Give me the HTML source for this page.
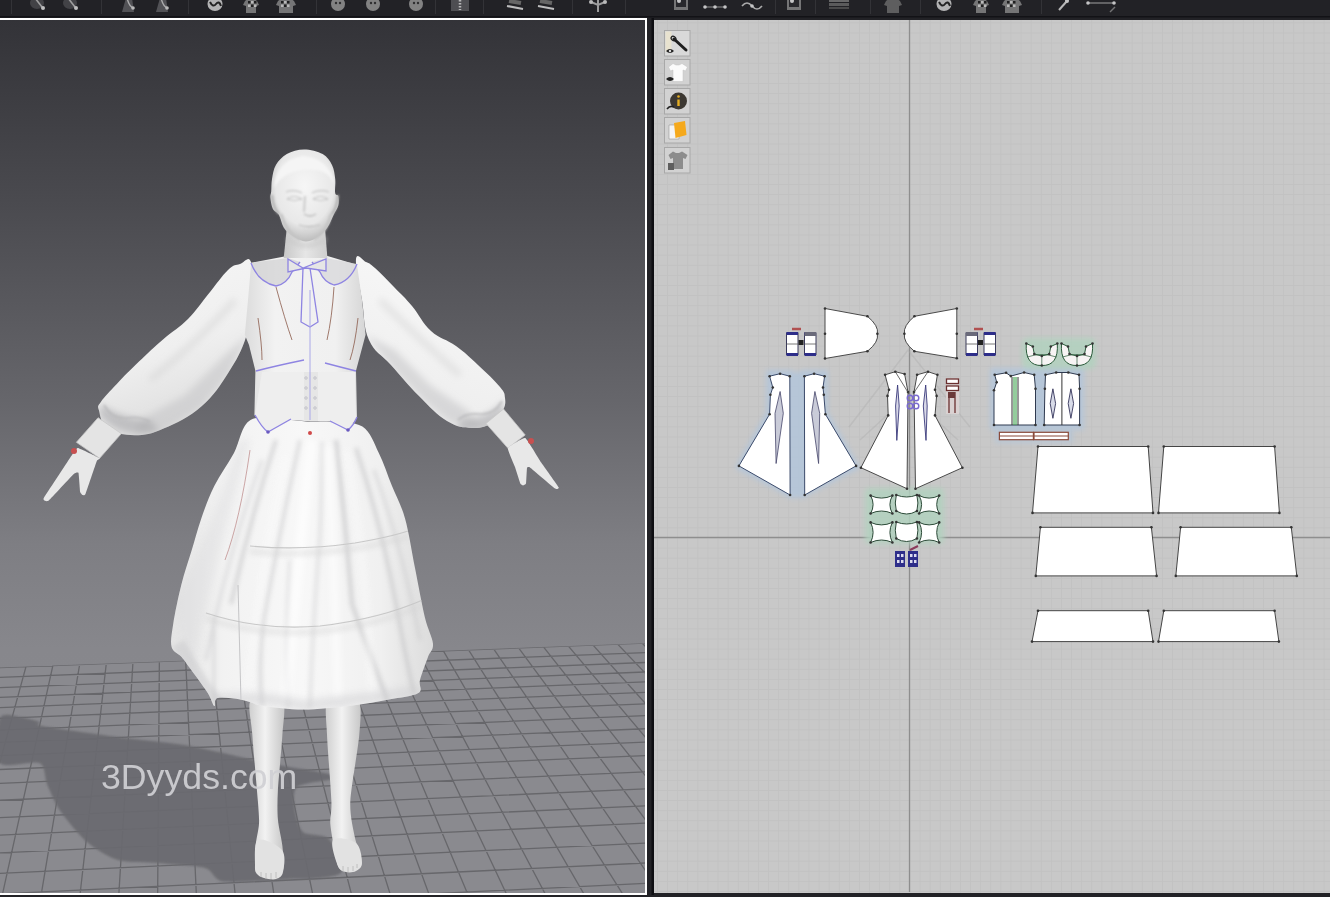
<!DOCTYPE html>
<html><head><meta charset="utf-8"><style>
html,body{margin:0;padding:0;background:#222226;width:1330px;height:897px;overflow:hidden}
svg{display:block}
</style></head><body>
<svg width="1330" height="897" viewBox="0 0 1330 897">
<defs>
<linearGradient id="bg" x1="0" y1="0" x2="0" y2="1">
<stop offset="0" stop-color="#333338"/>
<stop offset="0.207" stop-color="#4a4a4f"/>
<stop offset="0.436" stop-color="#66666b"/>
<stop offset="0.6" stop-color="#7e7e83"/>
<stop offset="0.72" stop-color="#87878c"/>
<stop offset="1" stop-color="#8a8a8f"/>
</linearGradient>
<linearGradient id="gLeg" x1="0" y1="0" x2="1" y2="0">
<stop offset="0" stop-color="#cfcfcf"/><stop offset="0.45" stop-color="#f2f2f2"/><stop offset="1" stop-color="#c6c6c6"/>
</linearGradient>
<linearGradient id="gSleeveL" x1="0" y1="0" x2="0.3" y2="1">
<stop offset="0" stop-color="#f6f6f6"/><stop offset="0.6" stop-color="#efefef"/><stop offset="1" stop-color="#dedede"/>
</linearGradient>
<linearGradient id="gSleeveR" x1="0" y1="0" x2="-0.3" y2="1">
<stop offset="0" stop-color="#f6f6f6"/><stop offset="0.6" stop-color="#efefef"/><stop offset="1" stop-color="#dedede"/>
</linearGradient>
<linearGradient id="gSkirt" x1="0" y1="0" x2="1" y2="0">
<stop offset="0" stop-color="#e4e4e4"/><stop offset="0.2" stop-color="#f2f2f2"/><stop offset="0.5" stop-color="#f8f8f8"/><stop offset="0.8" stop-color="#f0f0f0"/><stop offset="1" stop-color="#dcdcdc"/>
</linearGradient>
<radialGradient id="gHead" cx="0.5" cy="0.4" r="0.6">
<stop offset="0" stop-color="#f6f6f6"/><stop offset="0.7" stop-color="#e8e8e8"/><stop offset="1" stop-color="#bcbcbc"/>
</radialGradient>
<filter id="soft" x="-5%" y="-5%" width="110%" height="110%"><feGaussianBlur stdDeviation="1.2"/></filter>
<pattern id="pgrid" x="909.5" y="537.5" width="10.1" height="10.1" patternUnits="userSpaceOnUse"><path d="M0 0.5H10.1M0.5 0V10.1" stroke="#bcbcbc" stroke-width="1" fill="none" opacity="0.5"/></pattern>
<filter id="halo" x="-20%" y="-20%" width="140%" height="140%"><feGaussianBlur stdDeviation="2.5"/></filter>
<clipPath id="clipSL"><path d="M251.0 262.0C248.6 254.8 244.6 262.4 240.0 264.0C235.4 265.6 234.4 263.9 228.0 270.0C221.6 276.1 216.0 284.8 208.0 294.6C200.0 304.4 196.9 310.1 188.0 319.0C179.1 327.9 173.4 330.5 163.6 339.0C153.8 347.5 148.4 352.6 139.0 361.6C129.6 370.6 124.4 375.9 116.8 383.9C109.2 391.9 104.6 396.4 101.0 401.7C97.4 407.0 97.6 405.2 99.0 410.6C100.4 416.0 100.7 423.6 107.8 428.5C114.9 433.4 123.4 435.2 134.6 435.2C145.8 435.2 150.2 434.3 163.6 428.5C177.0 422.7 188.7 417.4 201.6 406.2C214.5 395.0 219.4 386.5 228.3 372.7C237.2 358.9 241.3 351.5 246.0 337.0C250.7 322.5 251.0 315.0 252.0 300.0C253.0 285.0 253.4 269.2 251.0 262.0Z"/></clipPath>
<clipPath id="clipSR"><path d="M356.0 259.0C356.8 251.4 362.2 260.2 366.0 262.0C369.8 263.8 369.4 263.0 375.0 268.0C380.6 273.0 386.6 279.4 394.0 287.0C401.4 294.6 404.6 297.2 412.0 306.0C419.4 314.8 422.2 323.0 431.0 331.0C439.8 339.0 446.6 339.2 456.0 346.0C465.4 352.8 469.2 356.8 478.0 365.0C486.8 373.2 494.6 380.4 500.0 387.0C505.4 393.6 504.4 393.4 505.0 398.0C505.6 402.6 505.6 405.0 503.0 410.0C500.4 415.0 498.2 419.4 492.0 423.0C485.8 426.6 481.0 428.4 472.0 428.0C463.0 427.6 457.6 427.4 447.0 421.0C436.4 414.6 430.2 407.2 419.0 396.0C407.8 384.8 401.0 376.2 391.0 365.0C381.0 353.8 374.8 353.0 369.0 340.0C363.2 327.0 364.6 316.2 362.0 300.0C359.4 283.8 355.2 266.6 356.0 259.0Z"/></clipPath>
<clipPath id="clipSK"><path d="M250.5 420.0C241.0 425.5 240.0 442.0 234.0 453.0C228.0 464.0 219.8 475.1 214.3 486.0C208.8 496.9 205.0 507.8 201.2 518.7C197.4 529.6 194.6 540.6 191.3 551.6C188.0 562.6 184.4 572.4 181.4 584.5C178.4 596.6 174.8 613.6 173.2 624.0C171.6 634.4 170.2 641.5 171.6 647.0C173.0 652.5 178.1 653.0 181.4 656.8C184.7 660.6 186.9 664.0 191.3 670.0C195.7 676.0 204.0 687.0 207.8 693.0C211.6 699.0 212.7 705.2 214.3 706.0C215.9 706.8 213.2 699.1 217.6 698.0C222.0 696.9 233.0 698.3 240.7 699.6C248.4 700.9 253.3 704.4 263.7 706.0C274.1 707.6 288.8 709.5 303.0 709.5C317.2 709.5 334.9 707.6 349.2 706.0C363.5 704.4 377.2 701.8 388.7 699.6C400.2 697.4 413.1 696.3 418.3 693.0C423.5 689.7 418.4 686.0 420.0 680.0C421.6 674.0 425.8 663.0 428.0 657.0C430.2 651.0 433.5 650.3 433.0 643.7C432.5 637.1 427.9 630.0 424.9 617.4C421.9 604.8 418.3 584.5 415.0 568.0C411.7 551.5 408.9 532.4 405.1 518.7C401.3 505.0 396.4 496.9 392.0 486.0C387.6 475.1 383.7 462.9 378.8 453.0C373.9 443.1 370.5 431.8 362.4 426.6C354.3 421.4 338.7 422.8 330.0 422.0C321.3 421.2 316.5 422.3 310.0 422.0C303.5 421.7 300.9 420.3 291.0 420.0C281.1 419.7 260.0 414.5 250.5 420.0Z"/></clipPath>
<linearGradient id="gNeck" x1="0" y1="0" x2="1" y2="0"><stop offset="0" stop-color="#c8c8c8"/><stop offset="0.5" stop-color="#e6e6e6"/><stop offset="1" stop-color="#cfcfcf"/></linearGradient>
<filter id="blur1" x="-20%" y="-20%" width="140%" height="140%"><feGaussianBlur stdDeviation="0.8"/></filter>
<filter id="blur2" x="-20%" y="-20%" width="140%" height="140%"><feGaussianBlur stdDeviation="2"/></filter>
<filter id="blur3" x="-20%" y="-20%" width="140%" height="140%"><feGaussianBlur stdDeviation="3.5"/></filter>
<linearGradient id="gTorso" x1="0" y1="0" x2="1" y2="0"><stop offset="0" stop-color="#dcdcdc"/><stop offset="0.25" stop-color="#f2f2f2"/><stop offset="0.75" stop-color="#f0f0f0"/><stop offset="1" stop-color="#d6d6d6"/></linearGradient>
<clipPath id="vp"><rect x="0" y="20" width="645" height="873"/></clipPath>
<clipPath id="floorclip"><polygon points="-10.0,668.0 660.0,642.6 646,893 0,893"/></clipPath>
</defs>
<rect x="0" y="0" width="1330" height="897" fill="#222226"/>
<clipPath id="tbclip"><rect x="0" y="0" width="1330" height="16"/></clipPath>
<g clip-path="url(#tbclip)" opacity="0.8"><g><rect x="11" y="0" width="1" height="14" fill="#38383c"/><rect x="101" y="0" width="1" height="14" fill="#38383c"/><rect x="188" y="0" width="1" height="14" fill="#38383c"/><rect x="316" y="0" width="1" height="14" fill="#38383c"/><rect x="435" y="0" width="1" height="14" fill="#38383c"/><rect x="483" y="0" width="1" height="14" fill="#38383c"/><rect x="572" y="0" width="1" height="14" fill="#38383c"/><rect x="625" y="0" width="1" height="14" fill="#38383c"/><rect x="775" y="0" width="1" height="14" fill="#38383c"/><rect x="815" y="0" width="1" height="14" fill="#38383c"/><rect x="870" y="0" width="1" height="14" fill="#38383c"/><rect x="920" y="0" width="1" height="14" fill="#38383c"/><rect x="1041" y="0" width="1" height="14" fill="#38383c"/><ellipse cx="37" cy="3" rx="7" ry="6" fill="#4a4a4e"/><path d="M35 -2L42 7" stroke="#bdbdbd" stroke-width="1.6"/><circle cx="43" cy="8" r="2" fill="#e6e6e6"/><ellipse cx="70" cy="3" rx="7" ry="6" fill="#4a4a4e"/><path d="M68 -2L75 7" stroke="#bdbdbd" stroke-width="1.6"/><circle cx="76" cy="8" r="2" fill="#e6e6e6"/><path d="M122 12L126 -2L132 -2L134 12Z" fill="#5e5e62"/><path d="M127 -2Q129 6 133 8" stroke="#cfcfcf" stroke-width="1.4" fill="none"/><circle cx="133" cy="8" r="1.8" fill="#e0e0e0"/><path d="M156 12L160 -2L166 -2L168 12Z" fill="#5e5e62"/><path d="M161 -2Q163 6 167 8" stroke="#cfcfcf" stroke-width="1.4" fill="none"/><circle cx="167" cy="8" r="1.8" fill="#e0e0e0"/><ellipse cx="215" cy="4" rx="7.5" ry="7" fill="#d8d8d8"/><path d="M210 2q3 6 6 2q3-4 5 2" stroke="#222" stroke-width="2" fill="none"/><path d="M245 1l4-3h4l4 3l2 4l-3 1v7h-10v-7l-3-1z" fill="#8a8a8a"/><rect x="248" y="1.0" width="2.5" height="2.5" fill="#1e1e1e"/><rect x="248" y="4.5" width="2.5" height="2.5" fill="#e0e0e0"/><rect x="251" y="1.0" width="2.5" height="2.5" fill="#e0e0e0"/><rect x="251" y="4.5" width="2.5" height="2.5" fill="#1e1e1e"/><rect x="254" y="1.0" width="2.5" height="2.5" fill="#1e1e1e"/><rect x="254" y="4.5" width="2.5" height="2.5" fill="#e0e0e0"/><path d="M278 1l4-3h8l4 3l2 4l-3 1v7h-14v-7l-3-1z" fill="#8a8a8a"/><rect x="281" y="1.0" width="2.5" height="2.5" fill="#1e1e1e"/><rect x="281" y="4.5" width="2.5" height="2.5" fill="#e0e0e0"/><rect x="284" y="1.0" width="2.5" height="2.5" fill="#e0e0e0"/><rect x="284" y="4.5" width="2.5" height="2.5" fill="#1e1e1e"/><rect x="287" y="1.0" width="2.5" height="2.5" fill="#1e1e1e"/><rect x="287" y="4.5" width="2.5" height="2.5" fill="#e0e0e0"/><circle cx="338" cy="4" r="7" fill="#9a9a9a"/><circle cx="336" cy="3" r="1.2" fill="#333"/><circle cx="340" cy="3" r="1.2" fill="#333"/><circle cx="373" cy="4" r="7" fill="#9a9a9a"/><circle cx="371" cy="3" r="1.2" fill="#333"/><circle cx="375" cy="3" r="1.2" fill="#333"/><circle cx="416" cy="4" r="7" fill="#9a9a9a"/><circle cx="414" cy="3" r="1.2" fill="#333"/><circle cx="418" cy="3" r="1.2" fill="#333"/><rect x="451" y="-2" width="18" height="13" fill="#5a5a5e"/><path d="M460 0v10" stroke="#ddd" stroke-width="2.5" stroke-dasharray="1.5 1.5"/><path d="M507 6L523 9" stroke="#e4e4e4" stroke-width="2.2"/><path d="M509 1l12 2" stroke="#777" stroke-width="4"/><path d="M538 6L554 9" stroke="#e4e4e4" stroke-width="2.2"/><path d="M540 1l12 2" stroke="#777" stroke-width="4"/><path d="M598 -2v14M591 2l7 3l7-3" stroke="#bbb" stroke-width="2" fill="none"/><circle cx="591" cy="2" r="2" fill="#e0e0e0"/><circle cx="605" cy="2" r="2" fill="#e0e0e0"/><rect x="674" y="-2" width="14" height="12" fill="#8a8a8a"/><rect x="676" y="-2" width="10" height="9" fill="#2a2a2e"/><circle cx="679" cy="1" r="2" fill="#eee"/><path d="M705 7h20" stroke="#aaa" stroke-width="1"/><circle cx="705" cy="7" r="1.8" fill="#eee"/><circle cx="715" cy="7" r="1.8" fill="#eee"/><circle cx="725" cy="7" r="1.8" fill="#eee"/><path d="M742 6q5-6 10 0t10 0" stroke="#ccc" stroke-width="1.6" fill="none"/><circle cx="752" cy="6" r="1.8" fill="#eee"/><rect x="787" y="-2" width="14" height="12" fill="#8a8a8a"/><rect x="789" y="-2" width="10" height="9" fill="#2a2a2e"/><circle cx="792" cy="1" r="2" fill="#eee"/><rect x="829" y="-1" width="20" height="3" fill="#7a7a7a"/><rect x="829" y="3" width="20" height="3" fill="#6a6a6a"/><rect x="829" y="7" width="20" height="2" fill="#555"/><path d="M886 1l4-3h6l4 3l2 4l-3 1v7h-12v-7l-3-1z" fill="#6e6e6e"/><ellipse cx="944" cy="4" rx="7.5" ry="7" fill="#d8d8d8"/><path d="M939 2q3 6 6 2q3-4 5 2" stroke="#222" stroke-width="2" fill="none"/><path d="M975 1l4-3h4l4 3l2 4l-3 1v7h-10v-7l-3-1z" fill="#8a8a8a"/><rect x="978" y="1.0" width="2.5" height="2.5" fill="#1e1e1e"/><rect x="978" y="4.5" width="2.5" height="2.5" fill="#e0e0e0"/><rect x="981" y="1.0" width="2.5" height="2.5" fill="#e0e0e0"/><rect x="981" y="4.5" width="2.5" height="2.5" fill="#1e1e1e"/><rect x="984" y="1.0" width="2.5" height="2.5" fill="#1e1e1e"/><rect x="984" y="4.5" width="2.5" height="2.5" fill="#e0e0e0"/><path d="M1004 1l4-3h8l4 3l2 4l-3 1v7h-14v-7l-3-1z" fill="#8a8a8a"/><rect x="1007" y="1.0" width="2.5" height="2.5" fill="#1e1e1e"/><rect x="1007" y="4.5" width="2.5" height="2.5" fill="#e0e0e0"/><rect x="1010" y="1.0" width="2.5" height="2.5" fill="#e0e0e0"/><rect x="1010" y="4.5" width="2.5" height="2.5" fill="#1e1e1e"/><rect x="1013" y="1.0" width="2.5" height="2.5" fill="#1e1e1e"/><rect x="1013" y="4.5" width="2.5" height="2.5" fill="#e0e0e0"/><path d="M1059 10L1067 1" stroke="#ddd" stroke-width="2"/><circle cx="1067" cy="1" r="2" fill="#eee"/><path d="M1088 3h26" stroke="#aaa" stroke-width="1.2"/><circle cx="1088" cy="3" r="1.8" fill="#eee"/><circle cx="1114" cy="3" r="1.8" fill="#eee"/><path d="M1110 12l5-5" stroke="#888" stroke-width="1.5"/></g></g>
<rect x="0" y="16" width="1330" height="1.5" fill="#121216"/>
<rect x="0" y="18" width="647" height="877" fill="#ffffff"/>
<g clip-path="url(#vp)">
<rect x="0" y="20" width="645" height="873" fill="url(#bg)"/>
<polygon points="-10.0,668.0 660.0,642.6 646,893 0,893" fill="#8a8a8f"/>
<path d="M-112.2 630L-272.3 900M-87.5 630L-233.2 900M-62.8 630L-194.2 900M-38.1 630L-155.1 900M-13.4 630L-116.0 900M11.3 630L-76.9 900M36.0 630L-37.8 900M60.7 630L1.2 900M85.4 630L40.3 900M110.1 630L79.4 900M134.9 630L118.5 900M159.6 630L157.6 900M184.3 630L196.6 900M209.0 630L235.7 900M233.7 630L274.8 900M258.4 630L313.9 900M283.1 630L353.0 900M307.8 630L392.0 900M332.5 630L431.1 900M357.2 630L470.2 900M381.9 630L509.3 900M406.6 630L548.4 900M431.3 630L587.4 900M456.0 630L626.5 900M480.7 630L665.6 900M505.4 630L704.7 900M530.1 630L743.7 900M554.8 630L782.8 900M579.5 630L821.9 900M604.2 630L861.0 900M628.9 630L900.1 900M653.6 630L939.1 900M678.3 630L978.2 900M703.1 630L1017.3 900M727.8 630L1056.4 900M752.5 630L1095.5 900M-10 668.0L660 642.6M-10 677.7L660 652.0M-10 688.0L660 661.9M-10 697.7L660 671.4M-10 708.0L660 681.3M-10 718.7L660 691.8M-10 730.5L660 703.2M-10 742.8L660 715.1M-10 756.1L660 728.1M-10 769.9L660 741.5M-10 783.8L660 754.9M-10 800.7L660 771.3M-10 818.1L660 788.2M-10 835.5L660 805.1M-10 853.4L660 822.5M-10 873.9L660 842.4M-10 894.4L660 862.3M-10 915.4L660 882.6M-10 936.9L660 903.5" stroke="#67676b" stroke-width="1.3" fill="none" clip-path="url(#floorclip)"/>

<path d="M0.0 718.0C2.7 711.9 14.7 716.5 20.0 717.0C25.3 717.5 36.6 720.8 39.5 722.0C42.4 723.2 31.5 724.0 42.0 726.0C52.5 728.0 99.1 734.5 118.0 737.0C136.9 739.5 167.1 742.2 184.0 745.0C200.9 747.8 234.5 755.6 245.0 758.0C255.5 760.4 257.8 761.9 263.0 763.0C268.2 764.1 275.2 764.5 284.0 766.0C292.8 767.5 322.6 772.3 329.0 774.0C335.4 775.7 336.3 777.3 332.0 779.0C327.7 780.7 301.9 782.9 297.0 787.0C292.1 791.1 294.2 804.0 295.0 810.0C295.8 816.0 298.5 828.1 303.0 832.0C307.5 835.9 323.8 833.8 329.0 839.0C334.2 844.2 343.2 865.8 342.0 871.0C340.8 876.2 327.1 876.9 320.0 878.0C312.9 879.1 301.8 878.5 289.0 879.0C276.2 879.5 235.2 883.1 224.0 881.6C212.8 880.1 213.8 870.5 205.0 868.0C196.2 865.5 169.6 864.1 158.0 863.0C146.4 861.9 127.5 862.8 118.0 860.0C108.5 857.2 94.7 848.6 87.0 842.0C79.3 835.4 65.3 818.2 60.0 810.5C54.7 802.8 49.7 790.3 47.0 784.0C44.3 777.7 45.8 765.8 39.5 763.0C33.2 760.2 5.3 769.0 0.0 763.0C-5.3 757.0 -2.7 724.1 0.0 718.0Z" fill="#6a6a6f" opacity="0.92" filter="url(#soft)"/>
<path d="M251.0 700.0C247.0 704.6 251.4 721.1 252.3 734.6C253.2 748.1 257.0 789.5 257.9 801.4C258.8 813.3 259.3 817.8 259.0 823.7C258.7 829.6 255.9 840.4 255.6 846.0C255.3 851.6 256.2 862.4 256.7 866.0C257.2 869.6 257.2 871.4 259.0 872.7C260.8 874.0 267.3 875.7 270.0 876.0C272.7 876.3 277.2 876.0 279.0 875.0C280.8 874.0 283.0 872.2 283.5 868.3C284.0 864.4 283.1 852.5 282.4 846.0C281.7 839.5 278.5 826.7 277.9 819.3C277.3 811.9 277.3 801.6 277.9 790.3C278.5 779.0 281.8 746.6 282.4 734.6C283.0 722.6 286.6 704.6 282.4 700.0C278.2 695.4 255.0 695.4 251.0 700.0Z" fill="url(#gLeg)"/>
<path d="M328.0 700.0C323.9 704.6 326.5 721.1 327.0 734.6C327.5 748.1 331.0 789.5 331.4 801.4C331.8 813.3 329.9 817.2 330.3 823.7C330.7 830.2 333.5 844.6 334.7 850.5C335.9 856.4 337.1 865.6 339.2 868.3C341.3 871.0 347.3 871.4 350.3 870.5C353.3 869.6 360.9 866.1 361.5 861.6C362.1 857.1 356.3 845.0 354.8 837.0C353.3 829.0 349.7 815.1 350.3 801.4C350.9 787.7 358.3 748.1 359.3 734.6C360.3 721.1 362.3 704.6 358.1 700.0C353.9 695.4 332.1 695.4 328.0 700.0Z" fill="url(#gLeg)"/>
<path d="M258.0 840.0C253.5 842.7 255.2 860.3 255.0 866.0C254.8 871.7 255.5 872.0 257.0 874.0C258.5 876.0 260.8 877.2 264.0 878.0C267.2 878.8 272.8 880.0 276.0 879.0C279.2 878.0 282.0 876.8 283.0 872.0C284.0 867.2 286.2 855.3 282.0 850.0C277.8 844.7 262.5 837.3 258.0 840.0Z" fill="#e2e2e2"/>
<path d="M333.0 840.0C330.0 843.8 335.8 860.7 338.0 866.0C340.2 871.3 343.0 871.2 346.0 872.0C349.0 872.8 353.3 872.5 356.0 871.0C358.7 869.5 362.0 867.7 362.0 863.0C362.0 858.3 360.8 846.8 356.0 843.0C351.2 839.2 336.0 836.2 333.0 840.0Z" fill="#e2e2e2"/>
<path d="M261 872v5M266 873v6M271 873v6M276 872v6M343 866v5M348 867v5M353 866v5M357 864v4" stroke="#b8b8b8" stroke-width="0.8"/>
<path d="M251.0 262.0C248.6 254.8 244.6 262.4 240.0 264.0C235.4 265.6 234.4 263.9 228.0 270.0C221.6 276.1 216.0 284.8 208.0 294.6C200.0 304.4 196.9 310.1 188.0 319.0C179.1 327.9 173.4 330.5 163.6 339.0C153.8 347.5 148.4 352.6 139.0 361.6C129.6 370.6 124.4 375.9 116.8 383.9C109.2 391.9 104.6 396.4 101.0 401.7C97.4 407.0 97.6 405.2 99.0 410.6C100.4 416.0 100.7 423.6 107.8 428.5C114.9 433.4 123.4 435.2 134.6 435.2C145.8 435.2 150.2 434.3 163.6 428.5C177.0 422.7 188.7 417.4 201.6 406.2C214.5 395.0 219.4 386.5 228.3 372.7C237.2 358.9 241.3 351.5 246.0 337.0C250.7 322.5 251.0 315.0 252.0 300.0C253.0 285.0 253.4 269.2 251.0 262.0Z" fill="url(#gSleeveL)"/>
<path d="M356.0 259.0C356.8 251.4 362.2 260.2 366.0 262.0C369.8 263.8 369.4 263.0 375.0 268.0C380.6 273.0 386.6 279.4 394.0 287.0C401.4 294.6 404.6 297.2 412.0 306.0C419.4 314.8 422.2 323.0 431.0 331.0C439.8 339.0 446.6 339.2 456.0 346.0C465.4 352.8 469.2 356.8 478.0 365.0C486.8 373.2 494.6 380.4 500.0 387.0C505.4 393.6 504.4 393.4 505.0 398.0C505.6 402.6 505.6 405.0 503.0 410.0C500.4 415.0 498.2 419.4 492.0 423.0C485.8 426.6 481.0 428.4 472.0 428.0C463.0 427.6 457.6 427.4 447.0 421.0C436.4 414.6 430.2 407.2 419.0 396.0C407.8 384.8 401.0 376.2 391.0 365.0C381.0 353.8 374.8 353.0 369.0 340.0C363.2 327.0 364.6 316.2 362.0 300.0C359.4 283.8 355.2 266.6 356.0 259.0Z" fill="url(#gSleeveR)"/>
<g clip-path="url(#clipSL)" filter="url(#blur3)">
<path d="M248 335 L228 375 L200 408 L165 430 L135 436 L140 420 L185 395 L225 355Z" fill="#c4c4c6" opacity="0.55"/>
<path d="M101 404 Q118 418 150 420 L160 432 Q118 440 99 414Z" fill="#a9a9ab" opacity="0.6"/>
<path d="M235 300 Q200 340 150 380" stroke="#cfcfd0" stroke-width="6" fill="none" opacity="0.5"/>
</g>
<g clip-path="url(#clipSR)" filter="url(#blur3)">
<path d="M366 335 L395 372 L425 402 L450 422 L480 428 L470 412 L430 385 L395 350Z" fill="#c4c4c6" opacity="0.55"/>
<path d="M504 400 Q490 418 462 420 L455 430 Q495 438 504 412Z" fill="#a9a9ab" opacity="0.6"/>
<path d="M380 300 Q420 340 460 375" stroke="#cfcfd0" stroke-width="6" fill="none" opacity="0.5"/>
</g>
<path d="M104 405 Q112 420 128 418 Q140 416 150 422" stroke="#b8b8ba" stroke-width="2.2" fill="none" opacity="0.7" filter="url(#blur1)"/>
<path d="M502 401 Q494 416 478 414 Q466 413 458 420" stroke="#b8b8ba" stroke-width="2.2" fill="none" opacity="0.7" filter="url(#blur1)"/>
<polygon points="98.1,417.7 121.3,433.6 99.6,458.3 76.4,442.3" fill="#e4e4e4" stroke="#c8c8c8" stroke-width="0.8"/>
<polygon points="486,423.5 503.5,409 525.2,435 507.8,448.1" fill="#e4e4e4" stroke="#c8c8c8" stroke-width="0.8"/>
<path d="M77.8 448.0C76.3 448.0 71.7 455.5 70.0 458.0C68.3 460.5 45.0 496.0 43.8 498.1C42.6 500.2 45.2 500.9 45.5 501.0C45.8 501.1 47.6 501.6 49.0 500.3C50.4 499.0 72.0 475.6 73.5 474.2C75.0 472.8 78.2 472.1 78.5 473.0C78.8 473.9 80.0 490.9 80.2 492.0C80.4 493.1 82.2 494.9 82.5 495.0C82.8 495.1 84.8 495.7 85.5 494.0C86.2 492.3 96.0 463.0 96.7 461.2C97.4 459.4 100.5 459.0 99.6 458.3C98.7 457.6 79.3 448.0 77.8 448.0Z" fill="#e8e8e8"/>
<path d="M507.8 448.1C507.3 449.6 514.4 465.2 515.0 467.0C515.6 468.8 519.9 482.6 520.3 483.5C520.7 484.4 522.7 485.5 523.0 485.5C523.3 485.5 525.8 484.5 526.0 483.6C526.2 482.7 526.8 468.8 527.0 468.0C527.2 467.2 528.6 466.5 530.0 467.5C531.4 468.5 552.9 486.9 554.2 488.0C555.6 489.1 556.8 489.0 557.0 489.0C557.2 489.0 559.4 488.5 558.6 487.2C557.8 485.9 542.9 465.1 541.2 462.6C539.5 460.1 526.9 438.7 525.2 438.0C523.5 437.3 508.3 446.7 507.8 448.1Z" fill="#e8e8e8"/>
<circle cx="74" cy="451" r="3" fill="#c85050"/>
<circle cx="531" cy="441" r="3" fill="#c85050"/>
<path d="M250.5 420.0C241.0 425.5 240.0 442.0 234.0 453.0C228.0 464.0 219.8 475.1 214.3 486.0C208.8 496.9 205.0 507.8 201.2 518.7C197.4 529.6 194.6 540.6 191.3 551.6C188.0 562.6 184.4 572.4 181.4 584.5C178.4 596.6 174.8 613.6 173.2 624.0C171.6 634.4 170.2 641.5 171.6 647.0C173.0 652.5 178.1 653.0 181.4 656.8C184.7 660.6 186.9 664.0 191.3 670.0C195.7 676.0 204.0 687.0 207.8 693.0C211.6 699.0 212.7 705.2 214.3 706.0C215.9 706.8 213.2 699.1 217.6 698.0C222.0 696.9 233.0 698.3 240.7 699.6C248.4 700.9 253.3 704.4 263.7 706.0C274.1 707.6 288.8 709.5 303.0 709.5C317.2 709.5 334.9 707.6 349.2 706.0C363.5 704.4 377.2 701.8 388.7 699.6C400.2 697.4 413.1 696.3 418.3 693.0C423.5 689.7 418.4 686.0 420.0 680.0C421.6 674.0 425.8 663.0 428.0 657.0C430.2 651.0 433.5 650.3 433.0 643.7C432.5 637.1 427.9 630.0 424.9 617.4C421.9 604.8 418.3 584.5 415.0 568.0C411.7 551.5 408.9 532.4 405.1 518.7C401.3 505.0 396.4 496.9 392.0 486.0C387.6 475.1 383.7 462.9 378.8 453.0C373.9 443.1 370.5 431.8 362.4 426.6C354.3 421.4 338.7 422.8 330.0 422.0C321.3 421.2 316.5 422.3 310.0 422.0C303.5 421.7 300.9 420.3 291.0 420.0C281.1 419.7 260.0 414.5 250.5 420.0Z" fill="url(#gSkirt)"/>
<g clip-path="url(#clipSK)">
<g filter="url(#blur2)" opacity="0.5">
<path d="M276 440 Q250 520 231 604" stroke="#bcbcbe" stroke-width="4" fill="none"/>
<path d="M300 440 Q280 530 264 617 Q258 660 262 706" stroke="#c0c0c2" stroke-width="3.5" fill="none"/>
<path d="M322 442 Q322 520 318 560 Q312 640 310 708" stroke="#c6c6c8" stroke-width="3" fill="none"/>
<path d="M336 440 Q346 530 352 604 Q372 660 388 702" stroke="#b8b8ba" stroke-width="4.5" fill="none"/>
<path d="M356 448 Q380 520 396 604 Q404 650 414 694" stroke="#bcbcbe" stroke-width="4" fill="none"/>
<path d="M290 560 Q285 640 288 708" stroke="#c8c8ca" stroke-width="3" fill="none"/>
<path d="M374 470 Q400 540 420 640" stroke="#c4c4c6" stroke-width="3" fill="none"/>
<path d="M262 460 Q226 560 206 660" stroke="#c8c8ca" stroke-width="3" fill="none"/>
<path d="M214 617 L214 703" stroke="#c0c0c2" stroke-width="2.5" fill="none"/>
</g>
<g filter="url(#blur3)" opacity="0.7">
<path d="M312 440 Q300 540 286 700" stroke="#ffffff" stroke-width="9" fill="none"/>
<path d="M328 445 Q334 560 338 700" stroke="#ffffff" stroke-width="7" fill="none"/>
<path d="M346 450 Q366 560 372 700" stroke="#fafafa" stroke-width="6" fill="none"/>
<path d="M286 455 Q262 560 246 700" stroke="#fafafa" stroke-width="6" fill="none"/>
</g>
<path d="M172 600 Q200 560 240 440 L250 440 Q215 560 190 680Z" fill="#d8d8da" opacity="0.35" filter="url(#blur3)"/>
<path d="M250 546 Q300 551 355 543 Q390 537 408 531" stroke="#c8c8c8" stroke-width="1.1" fill="none"/>
<path d="M250 548 Q300 553 355 545 Q390 539 408 533 L408 540 Q390 546 355 552 Q300 560 250 555Z" fill="#d4d4d4" opacity="0.35" filter="url(#blur2)"/>
<path d="M206 613 Q260 631 320 626 Q380 619 425 599" stroke="#c8c8c8" stroke-width="1.1" fill="none"/>
<path d="M206 615 Q260 633 320 628 Q380 621 425 601 L425 608 Q380 628 320 635 Q260 640 206 622Z" fill="#d4d4d4" opacity="0.35" filter="url(#blur2)"/>
<path d="M238 585 L241 702" stroke="#c0c0c2" stroke-width="0.9" fill="none"/>
<path d="M214 706 Q260 700 303 712 Q360 704 420 697 L420 686 Q360 694 303 700 Q260 690 214 694Z" fill="#cfcfd1" opacity="0.5" filter="url(#blur3)"/>
<path d="M172 647 Q190 675 214 706 L222 700 Q200 670 184 640Z" fill="#c8c8ca" opacity="0.5" filter="url(#blur2)"/>
</g>
<polygon points="251.2,262.7 287,256 327.5,256 357,264.8 362,300 365.6,334.7 356,370.8 357,417.4 348.6,430 329.6,421.6 310.5,421.6 291.4,419.5 268,432 254.4,415 255.4,370.8 249,345 244.8,334.7 248,300" fill="url(#gTorso)"/>
<polygon points="286.8,228 283.7,258 327.4,258 325,228" fill="url(#gNeck)"/>
<path d="M287 236 Q306 250 326 236 L326 242 Q306 254 287 242Z" fill="#c8c8c8" opacity="0.6" filter="url(#blur2)"/>
<path d="M304.0 149.4C298.0 149.4 291.5 151.4 286.8 154.0C282.1 156.6 278.4 160.8 275.9 165.0C273.4 169.2 272.8 174.6 272.0 179.0C271.2 183.4 271.5 188.4 271.2 191.5C270.9 194.6 270.1 194.8 270.4 197.7C270.7 200.6 271.4 205.8 272.8 208.7C274.2 211.6 277.2 211.9 279.0 215.0C280.8 218.1 281.6 224.0 283.7 227.4C285.8 230.8 287.9 232.8 291.5 235.2C295.1 237.5 301.2 241.2 305.6 241.5C310.0 241.8 314.4 239.2 318.0 236.8C321.6 234.5 324.8 231.0 327.4 227.4C330.0 223.8 331.8 218.6 333.6 215.0C335.4 211.4 337.5 208.7 338.3 205.6C339.1 202.5 338.8 198.3 338.3 196.2C337.8 194.1 335.7 195.9 335.2 193.0C334.7 190.1 335.7 183.7 335.2 179.0C334.7 174.3 334.1 169.2 332.0 165.0C329.9 160.8 327.4 156.6 322.7 154.0C318.0 151.4 310.0 149.4 304.0 149.4Z" fill="url(#gHead)"/>
<g filter="url(#blur1)">
<path d="M274 188 Q276 160 303 156 Q330 158 335 186 Q330 172 316 170 Q300 168 288 174 Q278 180 274 188Z" fill="#f6f6f6" opacity="0.9"/>
<path d="M286 192 Q294 189 302 193 M312 193 Q320 189 329 192" stroke="#c6c6c6" stroke-width="1.3" fill="none"/>
<path d="M287 199 Q294 194 302 199 Q294 202 287 199Z" fill="#f2f2f2" stroke="#b8b8b8" stroke-width="0.9"/>
<path d="M313 199 Q320 194 328 199 Q320 202 313 199Z" fill="#f2f2f2" stroke="#b8b8b8" stroke-width="0.9"/>
<path d="M305 196 L304 212" stroke="#cfcfcf" stroke-width="2.2" fill="none"/>
<path d="M304 214 Q310 218 316 214" stroke="#b8b8b8" stroke-width="1.3" fill="none"/>
<path d="M299 225 Q309 228.5 320 225" stroke="#bdbdbd" stroke-width="1.3" fill="none"/>
<path d="M303 230 Q310 233 317 230" stroke="#d4d4d4" stroke-width="1.1" fill="none"/>
<path d="M281 214 Q286 232 300 240" stroke="#c4c4c4" stroke-width="2.5" fill="none"/>
<path d="M331 214 Q327 232 314 240" stroke="#c4c4c4" stroke-width="2.5" fill="none"/>
<path d="M272 195 Q273 208 279 214 M338 195 Q337 208 332 214" stroke="#b0b0b0" stroke-width="2" fill="none"/>
</g>
<path d="M251 263 Q258 282 276 286 Q287 284 292 272 L300 262 L288 258Z" fill="#d4d4d6" opacity="0.8"/>
<path d="M357 264 Q350 282 334 285 Q324 282 320 272 L312 262 L326 258Z" fill="#dadadc" opacity="0.8"/>
<path d="M262 372 L355 372 L356 417 L348 430 L330 421 L291 420 L268 432 L255 415Z" fill="#eeeeee"/>
<path d="M304 372 L318 372 L318 421 L304 421Z" fill="#e6e6e6"/>
<g fill="none" stroke-width="1.3">
<path d="M251 263 Q258 282 276 286 Q287 284 292 272 L300 262 M357 264 Q350 282 334 285 Q324 282 320 272 L312 262" stroke="#8e84e2"/>
<path d="M288 259 L303 268 L326 259 L326 271 L306 268 L288 272Z" stroke="#8e84e2" fill="#e6e6e6"/>
<path d="M303 268 L301 322 L310 327 L318 322 L310 268" stroke="#8e84e2"/>
<path d="M310 290 L310 420" stroke="#aaa8e8" stroke-width="1"/>
<path d="M256 371 Q275 366 304 360 M325 363 Q340 367 356 371" stroke="#8e84e2"/>
<path d="M255 415 Q262 428 268 432 L291 419 M330 421 L348 430 Q354 425 357 417" stroke="#8e84e2"/>
<path d="M276 287 Q285 320 292 340 M334 287 Q332 318 327 340 M258 318 Q262 345 262 360 M358 318 Q355 345 350 360" stroke="#8a5a4a" stroke-width="0.8"/>
<path d="M250 450 Q240 520 225 560" stroke="#b07070" stroke-width="0.6"/>
</g>
<g fill="#e0e0e0" stroke="#b4b4c0" stroke-width="0.6">
<circle cx="306" cy="378" r="1.3"/><circle cx="315" cy="378" r="1.3"/><circle cx="306" cy="388" r="1.3"/><circle cx="315" cy="388" r="1.3"/><circle cx="306" cy="398" r="1.3"/><circle cx="315" cy="398" r="1.3"/><circle cx="306" cy="408" r="1.3"/><circle cx="315" cy="408" r="1.3"/>
</g>
<circle cx="310" cy="433" r="2" fill="#d04a4a"/>
<circle cx="268" cy="432" r="1.8" fill="#6a5ac0"/>
<circle cx="348" cy="430" r="1.8" fill="#6a5ac0"/>

<text x="101" y="789" font-family="Liberation Sans, sans-serif" font-size="35.7" fill="#d0d0d4" opacity="0.92">3Dyyds.com</text>
</g>
<rect x="651.5" y="18" width="2.5" height="877" fill="#0e0e12"/>
<rect x="654" y="20" width="676" height="873" fill="#c8c8c8"/>
<rect x="654" y="20" width="676" height="873" fill="url(#pgrid)"/>
<line x1="909.5" y1="20" x2="909.5" y2="892" stroke="#8e8e8e" stroke-width="1.3"/>
<line x1="654" y1="537.5" x2="1330" y2="537.5" stroke="#8e8e8e" stroke-width="1.3"/>
<g filter="url(#halo)" opacity="0.85">
<polygon points="766.0,370.0 793.0,370.0 793.0,499.0 735.0,468.0 766.0,412.0" fill="#b3c6db"/>
<polygon points="801.0,370.0 828.0,370.0 828.0,412.0 860.0,468.0 801.0,499.0" fill="#b3c6db"/>
<rect x="788" y="372" width="18" height="126" fill="#b3c6db"/>
<rect x="990" y="368" width="94" height="62" fill="#b3c6db"/>
<rect x="995" y="428" width="78" height="15" fill="#b7c6d6"/>
<rect x="1022" y="338" width="74" height="31" rx="6" fill="#b2d2bf"/>
<rect x="865" y="488" width="79" height="56" rx="4" fill="#b2d2bf"/>
</g>
<path d="M849 427L908 350L970 427M860 440L909 395L958 440" stroke="#a8a8a8" stroke-width="1.6" fill="none" opacity="0.35"/>
<path d="M825 308.5L867.4 316.3Q879 326 877.4 333.8Q879 342 867.4 351.3L825 358.5Z" fill="#fff" stroke="#4a4a4a" stroke-width="1"/><circle cx="825.0" cy="308.5" r="1.3" fill="#333"/><circle cx="867.4" cy="316.3" r="1.3" fill="#333"/><circle cx="877.4" cy="333.8" r="1.3" fill="#333"/><circle cx="867.4" cy="351.3" r="1.3" fill="#333"/><circle cx="825.0" cy="358.5" r="1.3" fill="#333"/><circle cx="825.0" cy="333.8" r="1.3" fill="#333"/>
<path d="M956.8 308.5L914.4 316.3Q903 326 904.4 333.8Q903 342 914.4 351.3L956.8 358.2Z" fill="#fff" stroke="#4a4a4a" stroke-width="1"/><circle cx="956.8" cy="308.5" r="1.3" fill="#333"/><circle cx="914.4" cy="316.3" r="1.3" fill="#333"/><circle cx="904.4" cy="333.8" r="1.3" fill="#333"/><circle cx="914.4" cy="351.3" r="1.3" fill="#333"/><circle cx="956.8" cy="358.2" r="1.3" fill="#333"/><circle cx="956.8" cy="333.8" r="1.3" fill="#333"/>
<polygon points="769.6,376.2 780.1,373.7 789.8,376.2 790.1,495.0 738.9,465.9 769.6,414.2 770.4,394.8 772.8,387.5" fill="#ffffff" stroke="#3b4a6a" stroke-width="1.0"/><circle cx="769.6" cy="376.2" r="1.3" fill="#333"/><circle cx="780.1" cy="373.7" r="1.3" fill="#333"/><circle cx="789.8" cy="376.2" r="1.3" fill="#333"/><circle cx="790.1" cy="495.0" r="1.3" fill="#333"/><circle cx="738.9" cy="465.9" r="1.3" fill="#333"/><circle cx="769.6" cy="414.2" r="1.3" fill="#333"/><circle cx="770.4" cy="394.8" r="1.3" fill="#333"/><circle cx="772.8" cy="387.5" r="1.3" fill="#333"/>
<polygon points="804.4,376.2 814.1,373.7 824.6,376.2 823.0,387.5 823.8,394.8 825.4,414.2 856.1,465.9 804.7,495.0" fill="#ffffff" stroke="#3b4a6a" stroke-width="1.0"/><circle cx="804.4" cy="376.2" r="1.3" fill="#333"/><circle cx="814.1" cy="373.7" r="1.3" fill="#333"/><circle cx="824.6" cy="376.2" r="1.3" fill="#333"/><circle cx="823.0" cy="387.5" r="1.3" fill="#333"/><circle cx="823.8" cy="394.8" r="1.3" fill="#333"/><circle cx="825.4" cy="414.2" r="1.3" fill="#333"/><circle cx="856.1" cy="465.9" r="1.3" fill="#333"/><circle cx="804.7" cy="495.0" r="1.3" fill="#333"/>
<polygon points="780.1,391.5 783.3,413.3 776.1,463.5 775.0,413.3" fill="#c9cbd8" stroke="#45456a" stroke-width="0.8"/>
<polygon points="814.9,391.5 819.7,413.3 818.6,463.5 811.6,413.3" fill="#c9cbd8" stroke="#45456a" stroke-width="0.8"/>
<polygon points="885.1,374.8 895.3,371.7 904.6,374.0 908.0,392.0 907.0,488.7 860.9,467.7 888.2,415.4 887.5,395.9 889.0,389.7" fill="#ffffff" stroke="#4a4a4a" stroke-width="1.0"/><circle cx="885.1" cy="374.8" r="1.3" fill="#333"/><circle cx="895.3" cy="371.7" r="1.3" fill="#333"/><circle cx="904.6" cy="374.0" r="1.3" fill="#333"/><circle cx="908.0" cy="392.0" r="1.3" fill="#333"/><circle cx="907.0" cy="488.7" r="1.3" fill="#333"/><circle cx="860.9" cy="467.7" r="1.3" fill="#333"/><circle cx="888.2" cy="415.4" r="1.3" fill="#333"/><circle cx="887.5" cy="395.9" r="1.3" fill="#333"/><circle cx="889.0" cy="389.7" r="1.3" fill="#333"/>
<polygon points="917.1,374.8 928.0,371.7 937.4,374.8 935.0,389.7 936.6,395.9 935.0,415.4 962.4,467.7 915.5,488.7 914.0,392.0" fill="#ffffff" stroke="#4a4a4a" stroke-width="1.0"/><circle cx="917.1" cy="374.8" r="1.3" fill="#333"/><circle cx="928.0" cy="371.7" r="1.3" fill="#333"/><circle cx="937.4" cy="374.8" r="1.3" fill="#333"/><circle cx="935.0" cy="389.7" r="1.3" fill="#333"/><circle cx="936.6" cy="395.9" r="1.3" fill="#333"/><circle cx="935.0" cy="415.4" r="1.3" fill="#333"/><circle cx="962.4" cy="467.7" r="1.3" fill="#333"/><circle cx="915.5" cy="488.7" r="1.3" fill="#333"/><circle cx="914.0" cy="392.0" r="1.3" fill="#333"/>
<path d="M895.3 371.7L909 394M928 371.7L913 394" stroke="#444" stroke-width="0.8" fill="none"/>
<path d="M897.6 385L899.2 406L896.8 440.4L895.6 406ZM925.7 385L927.2 406L926 440.4L923.3 406Z" stroke="#3a3a7a" stroke-width="0.9" fill="#d8d8e8"/>
<g fill="none" stroke="#7a6ad0" stroke-width="1.4"><circle cx="910" cy="398" r="2.8"/><circle cx="916" cy="398" r="2.8"/><circle cx="910" cy="406" r="2.8"/><circle cx="916" cy="406" r="2.8"/></g>
<rect x="946" y="378" width="13" height="36" fill="#d9d1d1"/>
<g stroke="#6a3030" stroke-width="1.3" fill="none"><rect x="946.5" y="379" width="12" height="4.5" fill="#fff"/><rect x="946.5" y="386" width="12" height="4.5" fill="#fff"/><path d="M949 392V413M955 392V413"/></g>
<rect x="948" y="392" width="7" height="6" fill="#6a3a3a"/>
<rect x="786.5" y="333" width="11.5" height="21.5" fill="#fff" stroke="#3a3a5a" stroke-width="1"/><rect x="786.5" y="332" width="11.5" height="3" fill="#2e2e8a"/><rect x="786.5" y="353" width="11.5" height="3" fill="#2e2e8a"/><line x1="786.5" y1="344" x2="798.0" y2="344" stroke="#555" stroke-width="0.8"/>
<rect x="804.5" y="333" width="11.5" height="21.5" fill="#fff" stroke="#3a3a5a" stroke-width="1"/><rect x="804.5" y="332" width="11.5" height="3" fill="#2e2e8a"/><rect x="804.5" y="353" width="11.5" height="3" fill="#2e2e8a"/><line x1="804.5" y1="344" x2="816.0" y2="344" stroke="#555" stroke-width="0.8"/>
<rect x="966" y="333" width="11.5" height="21.5" fill="#fff" stroke="#3a3a5a" stroke-width="1"/><rect x="966" y="332" width="11.5" height="3" fill="#2e2e8a"/><rect x="966" y="353" width="11.5" height="3" fill="#2e2e8a"/><line x1="966" y1="344" x2="977.5" y2="344" stroke="#555" stroke-width="0.8"/>
<rect x="984" y="333" width="11.5" height="21.5" fill="#fff" stroke="#3a3a5a" stroke-width="1"/><rect x="984" y="332" width="11.5" height="3" fill="#2e2e8a"/><rect x="984" y="353" width="11.5" height="3" fill="#2e2e8a"/><line x1="984" y1="344" x2="995.5" y2="344" stroke="#555" stroke-width="0.8"/>
<rect x="798.5" y="340" width="5" height="5" fill="#222"/><rect x="978" y="340" width="5" height="5" fill="#222"/>
<path d="M792 329h9M974 329h9" stroke="#b05050" stroke-width="2.5"/>
<rect x="804.5" y="332" width="11.5" height="4" fill="#6a6a7a"/><rect x="966" y="332" width="11.5" height="4" fill="#6a6a7a"/>
<polygon points="994.7,374.8 1006.1,372.8 1010.8,376.1 1024.1,372.5 1034.2,374.8 1035.5,388.8 1035.5,425.0 994.0,425.0 994.0,390.2 996.7,382.2" fill="#ffffff" stroke="#2f3a50" stroke-width="1.0"/><circle cx="994.7" cy="374.8" r="1.3" fill="#333"/><circle cx="1006.1" cy="372.8" r="1.3" fill="#333"/><circle cx="1010.8" cy="376.1" r="1.3" fill="#333"/><circle cx="1024.1" cy="372.5" r="1.3" fill="#333"/><circle cx="1034.2" cy="374.8" r="1.3" fill="#333"/><circle cx="1035.5" cy="388.8" r="1.3" fill="#333"/><circle cx="1035.5" cy="425.0" r="1.3" fill="#333"/><circle cx="994.0" cy="425.0" r="1.3" fill="#333"/><circle cx="994.0" cy="390.2" r="1.3" fill="#333"/><circle cx="996.7" cy="382.2" r="1.3" fill="#333"/>
<polygon points="1045.5,374.8 1056.2,372.5 1068.3,372.5 1079.0,374.8 1079.6,388.8 1079.6,425.0 1044.2,425.0 1044.9,388.8" fill="#ffffff" stroke="#2f3a50" stroke-width="1.0"/><circle cx="1045.5" cy="374.8" r="1.3" fill="#333"/><circle cx="1056.2" cy="372.5" r="1.3" fill="#333"/><circle cx="1068.3" cy="372.5" r="1.3" fill="#333"/><circle cx="1079.0" cy="374.8" r="1.3" fill="#333"/><circle cx="1079.6" cy="388.8" r="1.3" fill="#333"/><circle cx="1079.6" cy="425.0" r="1.3" fill="#333"/><circle cx="1044.2" cy="425.0" r="1.3" fill="#333"/><circle cx="1044.9" cy="388.8" r="1.3" fill="#333"/>
<g stroke-width="1"><path d="M1012 377V425M1018 377V425" stroke="#333"/><path d="M1014 377V425M1016 377V425" stroke="#2a9a3a"/></g>
<path d="M1061.9 373V425" stroke="#333" stroke-width="1"/>
<path d="M1052.9 388.8L1055.6 403.5L1052.9 418.3L1050.2 403.5ZM1070.9 388.8L1073.6 403.5L1070.9 418.3L1068.2 403.5Z" fill="#d8dbe8" stroke="#34345a" stroke-width="0.9"/>
<g stroke="#8a4a3a" stroke-width="1.2" fill="#fff"><rect x="999.4" y="432.3" width="34" height="7.4"/><rect x="1034" y="432.3" width="34.3" height="7.4"/></g>
<path d="M999.4 436h68.9" stroke="#8a4a3a" stroke-width="1.2"/>
<path d="M1026.3 343.5 Q1024.8 366 1041.8 365.5 Q1058.8 366 1057.3 343.5 L1050.8 346.5 L1049.3 354 L1041.8 356 L1034.3 354 L1032.8 346.5 Z" fill="#f7f4f4" stroke="#2a5a3a" stroke-width="1"/><path d="M1041.8 356V365.5M1027.3 357Q1041.8 352 1056.3 357" stroke="#2a5a3a" stroke-width="0.7" fill="none"/><circle cx="1026.3" cy="343.5" r="1.3" fill="#333"/><circle cx="1057.3" cy="343.5" r="1.3" fill="#333"/><circle cx="1050.8" cy="346.5" r="1.3" fill="#333"/><circle cx="1032.8" cy="346.5" r="1.3" fill="#333"/><circle cx="1049.3" cy="354.0" r="1.3" fill="#333"/><circle cx="1034.3" cy="354.0" r="1.3" fill="#333"/><circle cx="1041.8" cy="356.0" r="1.3" fill="#333"/><circle cx="1041.8" cy="365.5" r="1.3" fill="#333"/>
<path d="M1061.5 343.5 Q1060.0 366 1077.0 365.5 Q1094.0 366 1092.5 343.5 L1086.0 346.5 L1084.5 354 L1077.0 356 L1069.5 354 L1068.0 346.5 Z" fill="#f7f4f4" stroke="#2a5a3a" stroke-width="1"/><path d="M1077.0 356V365.5M1062.5 357Q1077.0 352 1091.5 357" stroke="#2a5a3a" stroke-width="0.7" fill="none"/><circle cx="1061.5" cy="343.5" r="1.3" fill="#333"/><circle cx="1092.5" cy="343.5" r="1.3" fill="#333"/><circle cx="1086.0" cy="346.5" r="1.3" fill="#333"/><circle cx="1068.0" cy="346.5" r="1.3" fill="#333"/><circle cx="1084.5" cy="354.0" r="1.3" fill="#333"/><circle cx="1069.5" cy="354.0" r="1.3" fill="#333"/><circle cx="1077.0" cy="356.0" r="1.3" fill="#333"/><circle cx="1077.0" cy="365.5" r="1.3" fill="#333"/>
<polygon points="1038.0,446.5 1148.2,446.5 1153.0,512.9 1032.5,512.9" fill="#ffffff" stroke="#454545" stroke-width="1.0"/><circle cx="1038.0" cy="446.5" r="1.3" fill="#333"/><circle cx="1148.2" cy="446.5" r="1.3" fill="#333"/><circle cx="1153.0" cy="512.9" r="1.3" fill="#333"/><circle cx="1032.5" cy="512.9" r="1.3" fill="#333"/>
<polygon points="1163.8,446.5 1274.6,446.5 1279.4,512.9 1158.5,512.9" fill="#ffffff" stroke="#454545" stroke-width="1.0"/><circle cx="1163.8" cy="446.5" r="1.3" fill="#333"/><circle cx="1274.6" cy="446.5" r="1.3" fill="#333"/><circle cx="1279.4" cy="512.9" r="1.3" fill="#333"/><circle cx="1158.5" cy="512.9" r="1.3" fill="#333"/>
<polygon points="1040.4,527.3 1151.4,527.3 1156.6,575.9 1035.8,575.9" fill="#ffffff" stroke="#454545" stroke-width="1.0"/><circle cx="1040.4" cy="527.3" r="1.3" fill="#333"/><circle cx="1151.4" cy="527.3" r="1.3" fill="#333"/><circle cx="1156.6" cy="575.9" r="1.3" fill="#333"/><circle cx="1035.8" cy="575.9" r="1.3" fill="#333"/>
<polygon points="1180.6,527.3 1291.3,527.3 1296.8,575.9 1175.8,575.9" fill="#ffffff" stroke="#454545" stroke-width="1.0"/><circle cx="1180.6" cy="527.3" r="1.3" fill="#333"/><circle cx="1291.3" cy="527.3" r="1.3" fill="#333"/><circle cx="1296.8" cy="575.9" r="1.3" fill="#333"/><circle cx="1175.8" cy="575.9" r="1.3" fill="#333"/>
<polygon points="1038.0,610.7 1148.2,610.7 1153.0,641.6 1032.0,641.6" fill="#ffffff" stroke="#454545" stroke-width="1.0"/><circle cx="1038.0" cy="610.7" r="1.3" fill="#333"/><circle cx="1148.2" cy="610.7" r="1.3" fill="#333"/><circle cx="1153.0" cy="641.6" r="1.3" fill="#333"/><circle cx="1032.0" cy="641.6" r="1.3" fill="#333"/>
<polygon points="1163.8,610.7 1274.6,610.7 1278.9,641.6 1158.5,641.6" fill="#ffffff" stroke="#454545" stroke-width="1.0"/><circle cx="1163.8" cy="610.7" r="1.3" fill="#333"/><circle cx="1274.6" cy="610.7" r="1.3" fill="#333"/><circle cx="1278.9" cy="641.6" r="1.3" fill="#333"/><circle cx="1158.5" cy="641.6" r="1.3" fill="#333"/>
<path d="M870.6 495.6 Q881.5 500.6 892.4 495.6 Q887.4 504.55 892.4 513.5 Q881.5 508.5 870.6 513.5 Q875.6 504.55 870.6 495.6Z" fill="#fff" stroke="#2c4a38" stroke-width="1"/><circle cx="870.6" cy="495.6" r="1.3" fill="#333"/><circle cx="892.4" cy="495.6" r="1.3" fill="#333"/><circle cx="892.4" cy="513.5" r="1.3" fill="#333"/><circle cx="870.6" cy="513.5" r="1.3" fill="#333"/>
<path d="M896.3 495 Q906.5999999999999 499 916.9 495 Q918.9 503.0 916.9 511 Q906.5999999999999 517 896.3 511 Q894.3 503.0 896.3 495Z" fill="#fff" stroke="#2c4a38" stroke-width="1"/><circle cx="896.3" cy="495.0" r="1.3" fill="#333"/><circle cx="916.9" cy="495.0" r="1.3" fill="#333"/><circle cx="916.9" cy="511.0" r="1.3" fill="#333"/><circle cx="896.3" cy="511.0" r="1.3" fill="#333"/>
<path d="M919.1 495.6 Q929.1500000000001 500.6 939.2 495.6 Q934.2 504.55 939.2 513.5 Q929.1500000000001 508.5 919.1 513.5 Q924.1 504.55 919.1 495.6Z" fill="#fff" stroke="#2c4a38" stroke-width="1"/><circle cx="919.1" cy="495.6" r="1.3" fill="#333"/><circle cx="939.2" cy="495.6" r="1.3" fill="#333"/><circle cx="939.2" cy="513.5" r="1.3" fill="#333"/><circle cx="919.1" cy="513.5" r="1.3" fill="#333"/>
<path d="M870.6 522.4 Q881.5 527.4 892.4 522.4 Q887.4 532.45 892.4 542.5 Q881.5 537.5 870.6 542.5 Q875.6 532.45 870.6 522.4Z" fill="#fff" stroke="#2c4a38" stroke-width="1"/><circle cx="870.6" cy="522.4" r="1.3" fill="#333"/><circle cx="892.4" cy="522.4" r="1.3" fill="#333"/><circle cx="892.4" cy="542.5" r="1.3" fill="#333"/><circle cx="870.6" cy="542.5" r="1.3" fill="#333"/>
<path d="M896.3 522 Q906.5999999999999 526 916.9 522 Q918.9 530.25 916.9 538.5 Q906.5999999999999 544.5 896.3 538.5 Q894.3 530.25 896.3 522Z" fill="#fff" stroke="#2c4a38" stroke-width="1"/><circle cx="896.3" cy="522.0" r="1.3" fill="#333"/><circle cx="916.9" cy="522.0" r="1.3" fill="#333"/><circle cx="916.9" cy="538.5" r="1.3" fill="#333"/><circle cx="896.3" cy="538.5" r="1.3" fill="#333"/>
<path d="M919.1 522.4 Q929.1500000000001 527.4 939.2 522.4 Q934.2 532.45 939.2 542.5 Q929.1500000000001 537.5 919.1 542.5 Q924.1 532.45 919.1 522.4Z" fill="#fff" stroke="#2c4a38" stroke-width="1"/><circle cx="919.1" cy="522.4" r="1.3" fill="#333"/><circle cx="939.2" cy="522.4" r="1.3" fill="#333"/><circle cx="939.2" cy="542.5" r="1.3" fill="#333"/><circle cx="919.1" cy="542.5" r="1.3" fill="#333"/>
<g fill="#2e2e8a"><rect x="895" y="551" width="10" height="16"/><rect x="908" y="551" width="10" height="16"/></g>
<g fill="#dcdcf0"><rect x="897" y="554" width="2.5" height="3"/><rect x="901" y="554" width="2.5" height="3"/><rect x="897" y="560" width="2.5" height="3"/><rect x="901" y="560" width="2.5" height="3"/><rect x="910" y="554" width="2.5" height="3"/><rect x="914" y="554" width="2.5" height="3"/><rect x="910" y="560" width="2.5" height="3"/><rect x="914" y="560" width="2.5" height="3"/></g>
<path d="M910 550l8-4" stroke="#8a3a5a" stroke-width="2"/>
<g>
<rect x="664.5" y="30.5" width="25.5" height="25.5" fill="#d9d9d9" stroke="#a8a8a8"/>
<rect x="665.5" y="31.5" width="6" height="20" fill="#e8e2cf"/>
<path d="M674 39L686 50" stroke="#1e1e1e" stroke-width="3" stroke-linecap="round"/>
<ellipse cx="673.5" cy="38.5" rx="2.6" ry="2" fill="none" stroke="#1e1e1e" stroke-width="1.2" transform="rotate(40 673.5 38.5)"/>
<path d="M666 51q4-4 8 0q-4 4-8 0z" fill="#222"/><circle cx="670" cy="51" r="1.2" fill="#ddd"/>
<rect x="664.5" y="59.5" width="25.5" height="25.5" fill="#d2d2d2" stroke="#a8a8a8"/>
<path d="M673 63.5l3 1.5h3l3-1.5l5.5 3.5l-2 4l-2.5-1v11.5h-10v-11.5l-2.5 1l-2-4z" fill="#fbfbfb" stroke="#c0c0c0" stroke-width="0.5"/>
<path d="M666 79q4-4 8 0q-4 4-8 0z" fill="#222"/>
<rect x="664.5" y="88.5" width="25.5" height="25.5" fill="#d2d2d2" stroke="#a8a8a8"/>
<circle cx="678.5" cy="101" r="8.5" fill="#3c3832"/>
<circle cx="678.5" cy="96.5" r="1.3" fill="#e6ae22"/>
<path d="M678.5 99.5v6.5" stroke="#e6ae22" stroke-width="2.4"/>
<path d="M667 109q3-4 7-2" stroke="#222" stroke-width="1.6" fill="none"/>
<rect x="664.5" y="117.5" width="25.5" height="25.5" fill="#d2d2d2" stroke="#a8a8a8"/>
<path d="M669 125h10v14h-10z" fill="#f4f4f4" stroke="#999" stroke-width="0.6"/>
<path d="M674 123l11-2l1.5 14l-11 3z" fill="#f5a91c"/>
<rect x="664.5" y="147.5" width="25.5" height="25.5" fill="#d2d2d2" stroke="#a8a8a8"/>
<path d="M673 151.5l3 1.5h3l3-1.5l5.5 3.5l-2 4l-2.5-1v11h-10v-11l-2.5 1l-2-4z" fill="#8c8c8c"/>
<rect x="668" y="163" width="6" height="7" fill="#5e5e5e"/>
</g>
</svg>
</body></html>
